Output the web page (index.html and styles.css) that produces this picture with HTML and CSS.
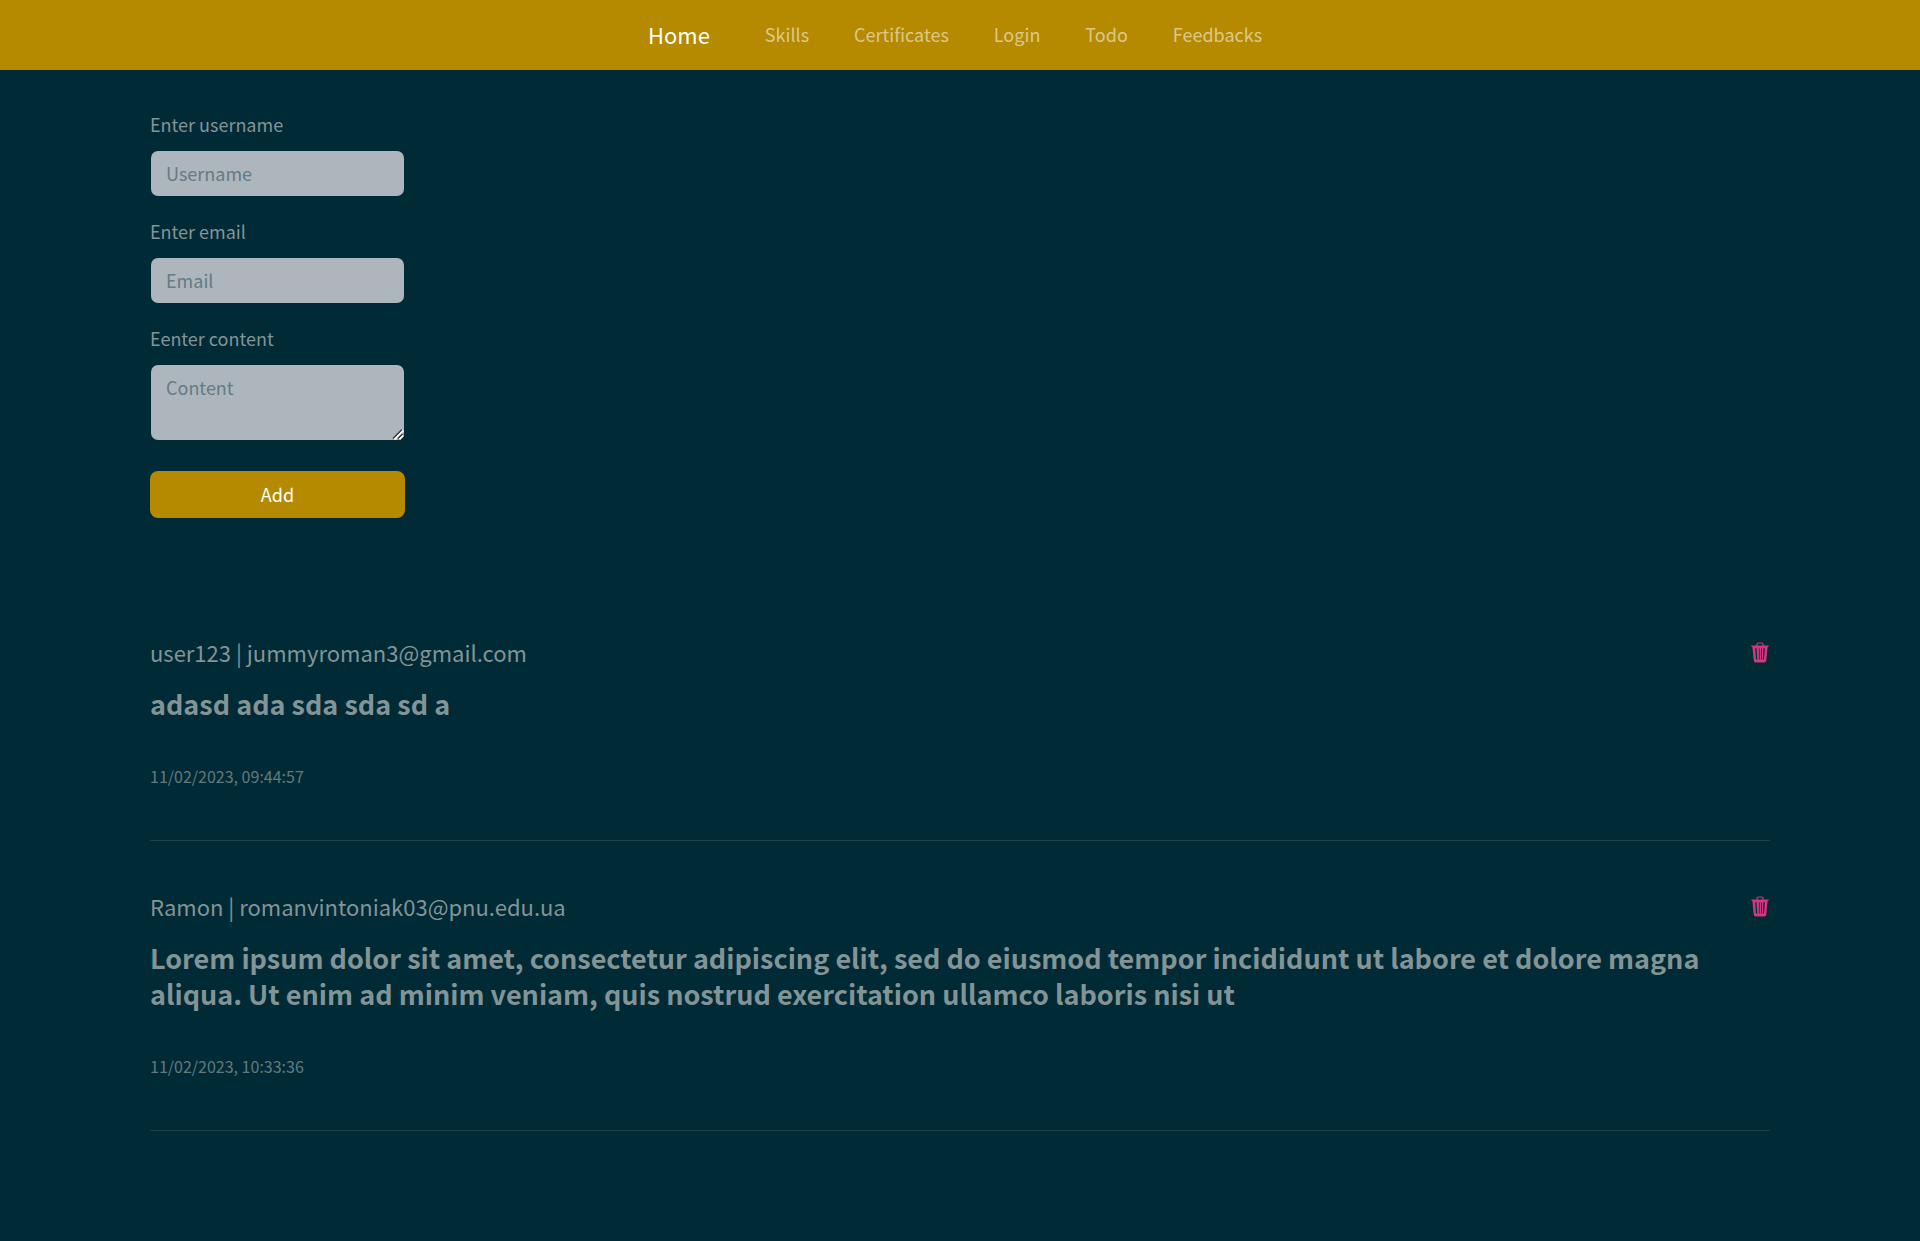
FILE: index.html
```html
<!DOCTYPE html>
<html lang="en">
<head>
<meta charset="utf-8">
<meta name="viewport" content="width=device-width, initial-scale=1">
<title>Feedbacks</title>
<link rel="stylesheet" href="styles.css">
</head>
<body>
<svg class="sprite" aria-hidden="true">
  <symbol id="trash" viewBox="0 0 18 21">
    <path d="M6 4V2.200Q6 1 7.200 1H10.800Q12 1 12 2.200V4" fill="none" stroke="currentColor" stroke-width="1.200"/>
    <path fill="currentColor" fill-rule="evenodd" d="M0.500 3.500H17.500V5H16.600L15.300 18.500Q15.100 20.500 13.300 20.500H4.700Q2.900 20.500 2.700 18.500L1.400 5H0.500ZM4.200 6.200L5 17.500H6.200L5.500 6.200ZM7.900 6.200V17.500H8.600V6.200ZM10.100 6.200V17.500H10.800V6.200ZM12.500 6.200L11.800 17.500H13L13.800 6.200Z"/>
  </symbol>
</svg>
<header class="navbar">
  <nav class="nav">
    <a class="brand" href="#">Home</a>
    <a class="nav-link" href="#">Skills</a>
    <a class="nav-link" href="#">Certificates</a>
    <a class="nav-link" href="#">Login</a>
    <a class="nav-link" href="#">Todo</a>
    <a class="nav-link" href="#">Feedbacks</a>
  </nav>
</header>
<main class="container">
  <form class="form">
    <div class="field">
      <label for="username">Enter username</label>
      <input class="control" id="username" type="text" placeholder="Username">
    </div>
    <div class="field">
      <label for="email">Enter email</label>
      <input class="control" id="email" type="email" placeholder="Email">
    </div>
    <div class="field">
      <label for="content">Eenter content</label>
      <textarea class="control" id="content" rows="2" placeholder="Content"></textarea>
    </div>
    <button class="submit" type="submit">Add</button>
  </form>
  <section class="feedbacks">
    <article class="feedback">
      <div class="feedback-head">
        <p class="author">user123 | jummyroman3@gmail.com</p>
        <button class="delete" type="button" aria-label="Delete"><svg class="icon"><use href="#trash"/></svg></button>
      </div>
      <h2 class="message">adasd ada sda sda sd a</h2>
      <time class="date">11/02/2023, 09:44:57</time>
    </article>
    <article class="feedback">
      <div class="feedback-head">
        <p class="author">Ramon | romanvintoniak03@pnu.edu.ua</p>
        <button class="delete" type="button" aria-label="Delete"><svg class="icon"><use href="#trash"/></svg></button>
      </div>
      <h2 class="message">Lorem ipsum dolor sit amet, consectetur adipiscing elit, sed do eiusmod tempor incididunt ut labore et dolore magna aliqua. Ut enim ad minim veniam, quis nostrud exercitation ullamco laboris nisi ut</h2>
      <time class="date">11/02/2023, 10:33:36</time>
    </article>
  </section>
</main>
</body>
</html>
```
FILE: styles.css
```css
*, *::before, *::after { box-sizing: border-box; }

body {
  margin: 0;
  background: #002b36;
  color: #839496;
  font-family: "Source Sans Pro", "Noto Sans CJK SC", sans-serif;
  font-size: 18px;
  line-height: 30px;
}

.sprite { display: none; }

.navbar {
  display: flex;
  justify-content: center;
  min-height: 70px;
  padding: 0 10px 2px 0;
  background: #b58900;
}

.nav {
  display: flex;
  flex-wrap: wrap;
  align-items: center;
  gap: 45px;
}

.nav a { text-decoration: none; }

.brand {
  margin-right: 10px;
  color: #fff;
  font-size: 22px;
}

.nav-link { color: rgba(255, 255, 255, 0.55); }

.container {
  max-width: 1650px;
  margin: 0 auto;
  padding: 40px 15px 0;
}

.form {
  display: flex;
  flex-direction: column;
  gap: 20px;
  width: 255px;
}

.field {
  display: flex;
  flex-direction: column;
  gap: 12px;
}

.field label { line-height: 28px; }

.control {
  display: block;
  width: 100%;
  height: 47px;
  padding: 7px 15px 9px;
  border: 1px solid transparent;
  border-radius: 8px;
  background: #adb5bd;
  background-clip: padding-box;
  color: #839496;
  font: inherit;
}

textarea.control {
  height: 77px;
  resize: vertical;
}

textarea.control::-webkit-resizer {
  background: url("data:image/svg+xml,%3Csvg xmlns='http://www.w3.org/2000/svg' viewBox='0 0 15 15'%3E%3Cpath d='M5 14L14 5M10 14L14 10' stroke='%23fff' stroke-width='3'/%3E%3Cpath d='M4 13.500L13 4.500M9 13.500L13.500 9' stroke='%23333' stroke-width='1.500'/%3E%3C/svg%3E") right bottom / 15px 15px no-repeat;
}

.control::placeholder {
  color: #657b83;
  opacity: 1;
}

.submit {
  height: 47px;
  margin-top: 10px;
  padding: 0 15px 2px;
  border: 0;
  border-radius: 8px;
  background: #b58900;
  color: #fff;
  font: inherit;
}

.feedbacks { padding-top: 69px; }

.feedback {
  padding: 50px 0 49px;
  border-bottom: 1px solid #1c434b;
}

.feedback-head {
  display: flex;
  align-items: center;
  justify-content: space-between;
  margin-bottom: 19px;
}

.author {
  margin: 0;
  font-size: 22px;
}

.delete {
  display: flex;
  padding: 0;
  border: 0;
  background: none;
  color: #d33682;
}

.icon {
  width: 20px;
  height: 21px;
}

.message {
  margin: 0 0 39px;
  font-size: 27px;
  font-weight: 700;
  line-height: 36px;
}

.date {
  display: block;
  opacity: 0.75;
  font-size: 16px;
}
```
